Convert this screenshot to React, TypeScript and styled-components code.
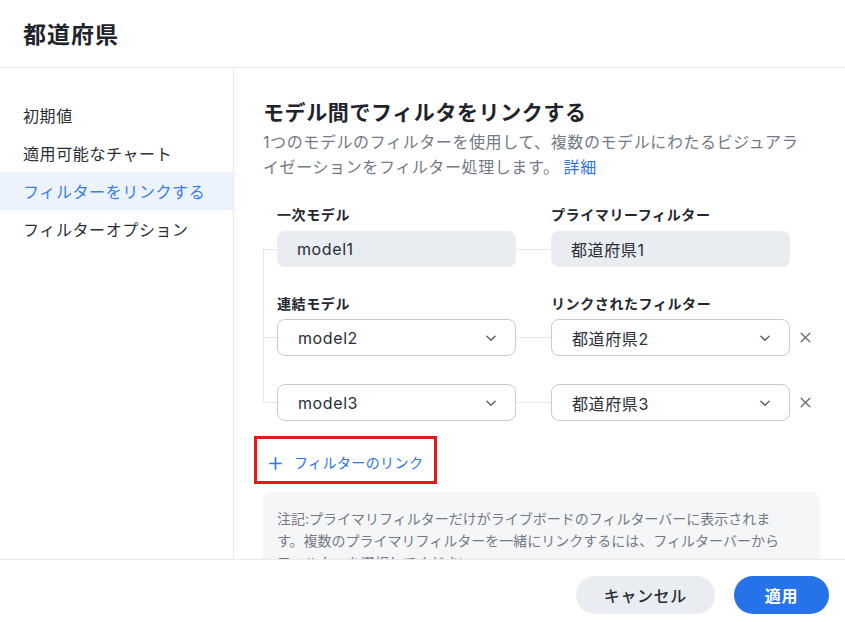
import React from 'react';

import styled, { createGlobalStyle } from 'styled-components';

const GlobalStyle = createGlobalStyle`
  html, body {
    margin: 0;
    padding: 0;
    background: #fff;
  }

  body {
    font-family: Inter, 'Noto Sans CJK JP', sans-serif;
    color: #23272f;
    letter-spacing: 0.6px;
  }

  * {
    box-sizing: border-box;
  }
`;

const Dialog = styled.div`
  width: 845px;
  height: 622px;
  display: flex;
  flex-direction: column;
  background: #fff;
  overflow: hidden;
`;

const Header = styled.header`
  height: 68px;
  flex: none;
  display: flex;
  align-items: center;
  padding: 0 23px 2px;
  border-bottom: 1px solid #e8eaee;

  h1 {
    margin: 0;
    font-size: 23px;
    font-weight: 700;
    color: #1f232b;
    letter-spacing: 1px;
  }
`;

const Body = styled.div`
  flex: 1;
  display: flex;
  min-height: 0;
`;

const Sidebar = styled.nav`
  width: 234px;
  flex: none;
  border-right: 1px solid #e8eaee;
  padding-top: 28px;
  display: flex;
  flex-direction: column;
`;

const NavItem = styled.div<{ $active?: boolean }>`
  height: 38px;
  display: flex;
  align-items: center;
  padding-left: 23px;
  font-size: 16px;
  color: ${({ $active }) => ($active ? '#3a7ce8' : '#2a2e36')};
  background: ${({ $active }) => ($active ? '#ecf3fd' : 'transparent')};
`;

const Main = styled.main`
  flex: 1;
  overflow: hidden;
  padding: 31px 25px 0 29px;
`;

const Title = styled.h2`
  margin: 0;
  font-size: 21px;
  line-height: 28px;
  font-weight: 700;
  color: #1f232b;
`;

const Description = styled.p`
  margin: 3px 0 0;
  width: 548px;
  font-size: 16px;
  line-height: 25px;
  color: #737985;

  a {
    color: #2a74e6;
    text-decoration: none;
    margin-left: 4px;
  }
`;

const Links = styled.div`
  position: relative;
  margin-top: 25px;

  &::before {
    content: '';
    position: absolute;
    left: 0;
    top: 44px;
    bottom: 18px;
    width: 1px;
    background: #e3e6eb;
  }
`;

const Row = styled.div<{ $gap?: number }>`
  display: grid;
  grid-template-columns: 14px 239px 35px 239px 30px;
  align-items: center;
  margin-top: ${({ $gap }) => $gap ?? 0}px;
`;

const Label = styled.div`
  font-size: 14px;
  line-height: 20px;
  font-weight: 700;
  color: #23272f;
`;

const Bridge = styled.div`
  height: 1px;
  background: #e3e6eb;
`;

const StaticBox = styled.div`
  height: 36px;
  border-radius: 8px;
  background: #e9ecf1;
  display: flex;
  align-items: center;
  padding-left: 20px;
  font-size: 16px;
  color: #2a2e36;
`;

const SelectBox = styled.div`
  height: 37px;
  border-radius: 8px;
  border: 1px solid #c6cbd3;
  background: #fff;
  display: flex;
  align-items: center;
  justify-content: space-between;
  padding: 0 17px 0 20px;
  font-size: 16px;
  color: #2a2e36;

  svg {
    color: #5d6470;
  }
`;

const RemoveButton = styled.button`
  border: 0;
  background: none;
  padding: 0;
  display: flex;
  align-items: center;
  justify-content: center;
  color: #6b717c;
  cursor: pointer;
`;

const Highlight = styled.div`
  display: inline-block;
  margin: 15px 0 0 -9px;
  border: 3px solid #e3191c;
  padding: 14px 11px 8px 11px;
`;

const AddLink = styled.button`
  border: 0;
  background: none;
  padding: 0;
  display: flex;
  align-items: center;
  gap: 11px;
  font-family: inherit;
  font-size: 14px;
  line-height: 20px;
  letter-spacing: 0.4px;
  color: #2a74e6;
  cursor: pointer;
`;

const Note = styled.div`
  margin-top: 8px;
  border-radius: 8px;
  background: #f5f6f8;
  padding: 16px 10px 20px 14px;
  font-size: 14px;
  line-height: 22px;
  letter-spacing: 0;
  color: #737985;
`;

const Footer = styled.footer`
  height: 63px;
  flex: none;
  border-top: 1px solid #e8eaee;
  display: flex;
  justify-content: flex-end;
  align-items: flex-start;
  gap: 19px;
  padding: 16px 16px 0 0;
`;

const FooterButton = styled.button<{ $primary?: boolean }>`
  height: 38px;
  border: 0;
  border-radius: 19px;
  padding: 0 ${({ $primary }) => ($primary ? 31 : 28)}px;
  font-family: inherit;
  font-size: 16px;
  letter-spacing: 0.6px;
  font-weight: ${({ $primary }) => ($primary ? 600 : 500)};
  color: ${({ $primary }) => ($primary ? '#fff' : '#2a2e36')};
  background: ${({ $primary }) => ($primary ? '#2673e9' : '#e9ecf1')};
  cursor: pointer;
`;

const Chevron = () => (
  <svg width='14' height='14' viewBox='0 0 24 24' fill='none' stroke='currentColor' strokeWidth='2.6' strokeLinecap='round' strokeLinejoin='round'>
    <path d='M5 9l7 7 7-7' />
  </svg>
);

const Cross = () => (
  <svg width='13' height='13' viewBox='0 0 24 24' fill='none' stroke='currentColor' strokeWidth='2.6' strokeLinecap='round'>
    <path d='M4 4l16 16M20 4L4 20' />
  </svg>
);

const Plus = () => (
  <svg width='15' height='15' viewBox='0 0 24 24' fill='none' stroke='currentColor' strokeWidth='2.6' strokeLinecap='round'>
    <path d='M12 3v18M3 12h18' />
  </svg>
);

const navItems = ['初期値', '適用可能なチャート', 'フィルターをリンクする', 'フィルターオプション'];

const linkedFilters = [
  { model: 'model2', filter: '都道府県2' },
  { model: 'model3', filter: '都道府県3' },
];

const App = () => {
  return (
    <>
      <GlobalStyle />
      <Dialog>
        <Header>
          <h1>都道府県</h1>
        </Header>
        <Body>
          <Sidebar>
            {navItems.map((item) => (
              <NavItem key={item} $active={item === 'フィルターをリンクする'}>
                {item}
              </NavItem>
            ))}
          </Sidebar>
          <Main>
            <Title>モデル間でフィルタをリンクする</Title>
            <Description>
              1つのモデルのフィルターを使用して、複数のモデルにわたるビジュアライゼーションをフィルター処理します。
              <a href='#'>詳細</a>
            </Description>

            <Links>
              <Row>
                <span />
                <Label>一次モデル</Label>
                <span />
                <Label>プライマリーフィルター</Label>
              </Row>
              <Row $gap={6}>
                <Bridge />
                <StaticBox>model1</StaticBox>
                <Bridge />
                <StaticBox>都道府県1</StaticBox>
              </Row>
              <Row $gap={27}>
                <span />
                <Label>連結モデル</Label>
                <span />
                <Label>リンクされたフィルター</Label>
              </Row>
              {linkedFilters.map((link, i) => (
                <Row key={link.model} $gap={i === 0 ? 5 : 28}>
                  <Bridge />
                  <SelectBox>
                    {link.model}
                    <Chevron />
                  </SelectBox>
                  <Bridge />
                  <SelectBox>
                    {link.filter}
                    <Chevron />
                  </SelectBox>
                  <RemoveButton aria-label='削除'>
                    <Cross />
                  </RemoveButton>
                </Row>
              ))}
            </Links>

            <Highlight>
              <AddLink>
                <Plus />
                フィルターのリンク
              </AddLink>
            </Highlight>

            <Note>
              注記:プライマリフィルターだけがライブボードのフィルターバーに表示されま
              <br />
              す。複数のプライマリフィルターを一緒にリンクするには、フィルターバーから
              <br />
              フィルターを選択してください。
            </Note>
          </Main>
        </Body>
        <Footer>
          <FooterButton>キャンセル</FooterButton>
          <FooterButton $primary>適用</FooterButton>
        </Footer>
      </Dialog>
    </>
  );
};

export default App;
